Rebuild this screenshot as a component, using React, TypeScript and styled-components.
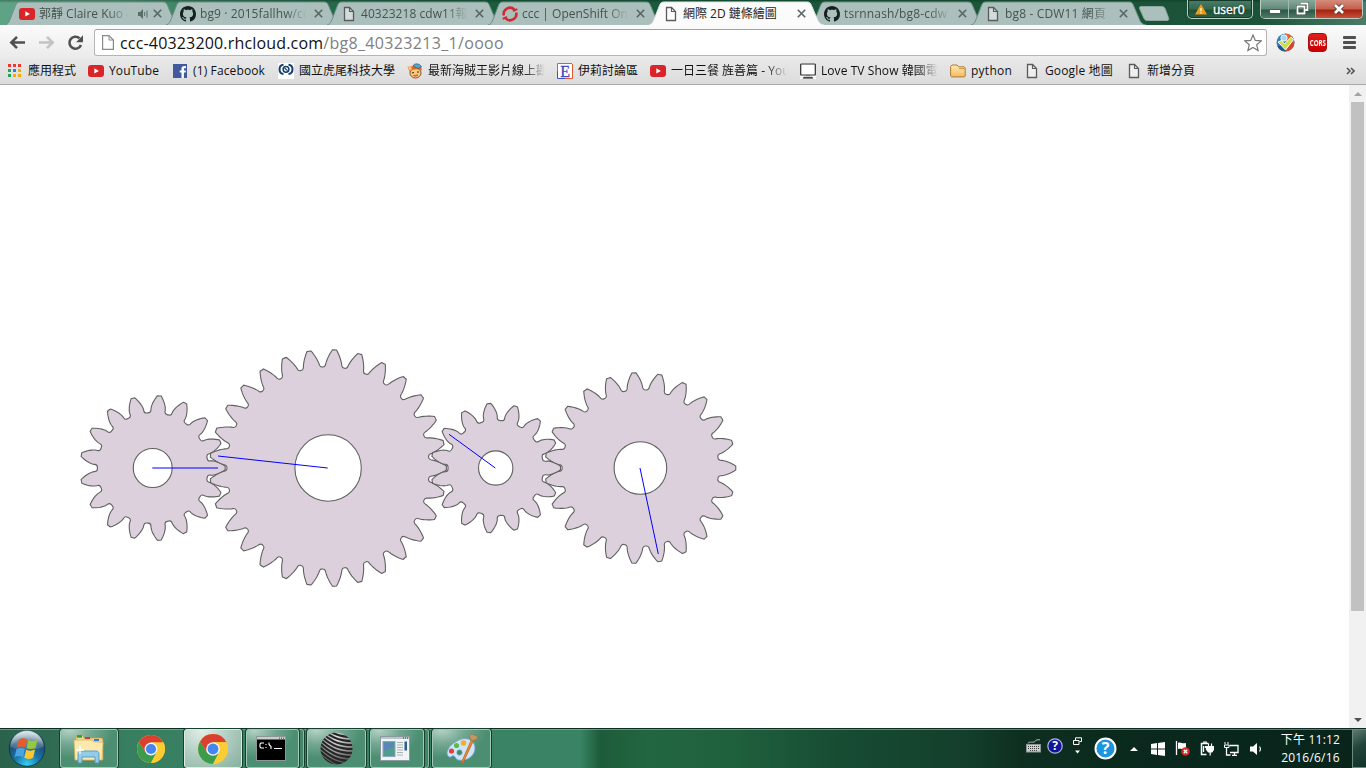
import React from "react";
import styled, { createGlobalStyle } from "styled-components";

const FONT = '"Open Sans", "Noto Sans CJK TC", sans-serif';

const GlobalStyle = createGlobalStyle`
  * { box-sizing: border-box; }
  html, body { margin: 0; padding: 0; overflow: hidden; }
  svg { display: block; flex: none; }
`;

const Screen = styled.div`
  width: 1366px;
  height: 768px;
  display: flex;
  flex-direction: column;
  overflow: hidden;
  background: #fff;
  font-family: ${FONT};
  font-size: 12px;
  color: #111;
`;

/* ---------- tab strip ---------- */

const TabStrip = styled.div`
  height: 25px;
  flex: none;
  display: flex;
  align-items: flex-start;
  padding-left: 5px;
  background:
    linear-gradient(180deg, rgba(0, 40, 20, 0.35) 0, rgba(0, 40, 20, 0) 3px),
    linear-gradient(90deg, #5fa386 0, #5a9d80 120px, #3f8668 175px, #25684a 330px, #1b5c3f 480px, #1a5538 1100px, #1b5238 1260px, #4c7c68 1366px);
`;

const TabBox = styled.div<{ $active?: boolean }>`
  position: relative;
  width: 175px;
  height: 25px;
  margin-right: -14px;
  z-index: ${(p) => (p.$active ? 2 : 1)};
  display: flex;
  align-items: center;
  padding: 2px 0 0 14px;
  flex: none;
  color: ${(p) => (p.$active ? "#222" : "#46524f")};
`;

const TabShape = styled.svg`
  position: absolute;
  left: 0;
  top: 0;
  z-index: -1;
`;

const TabIcon = styled.span`
  width: 16px;
  height: 16px;
  display: flex;
  align-items: center;
  justify-content: center;
  flex: none;
`;

const Label = styled.span<{ $w: number; $ls?: number; $fade?: boolean }>`
  width: ${(p) => p.$w}px;
  letter-spacing: ${(p) => p.$ls ?? 0}px;
  flex: none;
  white-space: nowrap;
  line-height: 18px;
  ${(p) => p.$fade && "mask-image: linear-gradient(90deg, #000 calc(100% - 22px), transparent);"}
`;

const TabLabel = styled(Label)`
  margin-left: 4px;
  font-size: 12px;
`;

const UserLabel = styled(Label)`
  -webkit-text-stroke: 0.4px #fff;
`;

const CloseSlot = styled.span<{ $w: number }>`
  width: ${(p) => p.$w}px;
  display: flex;
  justify-content: flex-end;
  align-items: center;
  gap: 4px;
  flex: none;
`;

const NewTab = styled.div`
  width: 32px;
  margin: 6px 0 0 6px;
  flex: none;
`;

const Caption = styled.div`
  margin-left: auto;
  display: flex;
  align-items: flex-start;
  gap: 7px;
  padding-right: 3px;
`;

const CaptionBox = styled.div`
  height: 19px;
  display: flex;
  border: 1px solid #b9cfc5;
  border-top: 0;
  border-radius: 0 0 5px 5px;
  box-shadow: inset 0 0 0 1px #143a29;
  overflow: hidden;
`;

const UserBox = styled(CaptionBox)`
  width: 66px;
  align-items: center;
  gap: 6px;
  padding-left: 7px;
  padding-top: 1px;
  color: #fff;
  text-shadow: 0 0 2px #000;
  background: linear-gradient(180deg, #4d7c67 0, #33684f 9px, #1d5138 10px, #2a6147 100%);
`;

const CaptionButton = styled.div<{ $w: number; $close?: boolean }>`
  width: ${(p) => p.$w}px;
  display: flex;
  align-items: center;
  justify-content: center;
  padding-bottom: 1px;
  border-right: ${(p) => (p.$close ? 0 : 1)}px solid #a3bcb1;
  background: ${(p) =>
    p.$close
      ? "linear-gradient(180deg, #d58c7c 0, #c4604b 9px, #a32210 10px, #c8503a 100%)"
      : "linear-gradient(180deg, #86a899 0, #62887a 9px, #2b5845 10px, #4d7b68 100%)"};
`;

/* ---------- toolbar ---------- */

const Toolbar = styled.div`
  height: 34px;
  flex: none;
  display: flex;
  align-items: center;
  padding: 1px 9px 0 7px;
  background: linear-gradient(180deg, #fbfbfb, #eaeaea);
`;

const NavButton = styled.span`
  width: 29px;
  display: flex;
  padding-left: 1px;
`;

const Omnibox = styled.div`
  width: 1173px;
  height: 27px;
  display: flex;
  align-items: center;
  padding: 0 4px 0 7px;
  background: #fff;
  border: 1px solid #b5b5b5;
  border-top-color: #a2a2a2;
  border-radius: 3px;
`;

const Url = styled.span`
  margin-left: 6px;
  font-size: 16px;
  line-height: 24px;
  letter-spacing: 0.33px;
  color: #808080;
  flex: 1;
  white-space: nowrap;
`;

const Host = styled.span`
  color: #111;
  letter-spacing: 0.17px;
`;

const Extensions = styled.div`
  display: flex;
  align-items: center;
  margin-left: 9px;
  flex: 1;
`;

const Cors = styled.div`
  width: 19px;
  height: 19px;
  margin: 0 16px 0 13px;
  border-radius: 4px;
  background: linear-gradient(180deg, #e0201c, #c00);
  border: 1px solid #a80c0c;
  color: #fff;
  font: 700 9px/17px "Open Sans", sans-serif;
  display: flex;
  justify-content: center;
  span { transform: scaleX(0.68); }
`;

const Bookmarks = styled.div`
  height: 26px;
  flex: none;
  display: flex;
  align-items: center;
  padding: 0 11px 2px 6px;
  background: linear-gradient(180deg, #e8e8e8, #dcdcdc);
  border-bottom: 1px solid #a9a9a9;
`;

const Bookmark = styled.div<{ $w: number }>`
  width: ${(p) => p.$w}px;
  display: flex;
  align-items: center;
  gap: 5px;
  flex: none;
`;

const Overflow = styled.svg`
  margin-left: auto;
`;

/* ---------- page ---------- */

const Page = styled.div`
  flex: 1;
  display: flex;
  min-height: 0;
`;

const ScrollBar = styled.div`
  width: 17px;
  margin-left: auto;
  background: #f1f1f1;
  display: flex;
  flex-direction: column;
  align-items: center;
`;

const ScrollArrow = styled.div`
  height: 17px;
  display: flex;
  align-items: center;
`;

const ScrollThumb = styled.div`
  width: 13px;
  height: 509px;
  background: #c1c1c1;
  margin-bottom: auto;
`;

/* ---------- taskbar ---------- */

const Taskbar = styled.div`
  height: 40px;
  flex: none;
  display: flex;
  align-items: flex-start;
  border-top: 1px solid #0c2c1e;
  box-shadow: inset 0 1px 0 rgba(150, 200, 175, 0.55);
  background: linear-gradient(90deg, #2a624b 0, #2f6b53 50px, #387f62 130px, #3a8264 480px, #3a8466 580px, #1d5c3b 600px, #226640 650px, #1f613d 730px, #174c33 840px, #133e2b 970px, #0d2f20 1020px, #0a281d 1150px, #08241b 1366px);
`;

const Orb = styled.div`
  width: 60px;
  padding: 1px 0 0 8px;
`;

const TaskButton = styled.div<{ $w: number; $kind?: "plain" | "active" }>`
  width: ${(p) => p.$w}px;
  height: 39px;
  margin-right: 4px;
  display: flex;
  align-items: center;
  justify-content: center;
  flex: none;
  ${(p) =>
    p.$kind !== "plain" &&
    `
    border: 1px solid ${p.$kind === "active" ? "#dcebe4" : "#a3c8b8"};
    border-radius: 3px;
    box-shadow: 0 0 0 1px #16402e;
    background: ${
      p.$kind === "active"
        ? "radial-gradient(ellipse at 30% 0, #e3eee9 0, #b4cfc3 45%, #86b09e 100%)"
        : "radial-gradient(ellipse 80% 75% at 15% 0, #b5d2c6 0, #74a892 50%, #4b8e72 100%)"
    };`}
`;

const CmdButton = styled(TaskButton)`
  padding-right: 3px;
`;

const WindowButton = styled(TaskButton)`
  padding-right: 4px;
`;

const StackEdge = styled.div<{ $mr: number }>`
  width: 4px;
  height: 39px;
  margin: 0 ${(p) => p.$mr}px 0 -3px;
  border: 1px solid #8ab8a5;
  border-left: 0;
  border-radius: 0 3px 3px 0;
  box-shadow: 1px 0 0 #16402e;
  background: #438468;
  flex: none;
`;

const Tray = styled.div`
  margin-left: auto;
  height: 39px;
  display: flex;
  align-items: center;
`;

const TraySlot = styled.span<{ $w: number; $dy?: number }>`
  width: ${(p) => p.$w}px;
  display: flex;
  justify-content: center;
  padding-bottom: ${(p) => p.$dy ?? 0}px;
`;

const Clock = styled.div`
  width: 84px;
  padding-left: 1px;
  color: #fff;
  text-align: center;
  font-size: 12px;
  line-height: 18px;
  letter-spacing: 0.2px;
`;

const ShowDesktop = styled.div`
  width: 14px;
  height: 39px;
  border: 1px solid #6d8a7f;
  border-right: 0;
  background: linear-gradient(150deg, #5c7b70 0, #22443a 45%, #12332a 100%);
`;

/* ---------- icons ---------- */

const PageIcon = ({ c = "#5b5b5b" }: { c?: string }) => (
  <svg width="16" height="16" viewBox="0 0 16 16">
    <path d="M3.5 1.5h5l4 4v9h-9z" fill="#fff" fillOpacity=".45" stroke={c} strokeWidth="1.3" />
    <path d="M8.5 1.5v4h4" fill="none" stroke={c} strokeWidth="1.1" />
  </svg>
);

const YouTubeIcon = () => (
  <svg width="16" height="16" viewBox="0 0 16 16">
    <rect x="0" y="2" width="16" height="12" rx="3" fill="#d9252a" />
    <path d="M6.3 5.3v5.2l4.6-2.6z" fill="#fff" />
  </svg>
);

const GitHubIcon = () => (
  <svg width="16" height="16" viewBox="0 0 16 16">
    <path
      fill="#16211f"
      d="M8 0C3.58 0 0 3.58 0 8c0 3.54 2.29 6.53 5.47 7.59.4.07.55-.17.55-.38 0-.19-.01-.82-.01-1.49-2.01.37-2.53-.49-2.69-.94-.09-.23-.48-.94-.82-1.13-.28-.15-.68-.52-.01-.53.63-.01 1.08.58 1.23.82.72 1.21 1.87.87 2.33.66.07-.52.28-.87.51-1.07-1.78-.2-3.64-.89-3.64-3.95 0-.87.31-1.59.82-2.15-.08-.2-.36-1.02.08-2.12 0 0 .67-.21 2.2.82.64-.18 1.32-.27 2-.27s1.36.09 2 .27c1.53-1.04 2.2-.82 2.2-.82.44 1.1.16 1.92.08 2.12.51.56.82 1.27.82 2.15 0 3.07-1.87 3.75-3.65 3.95.29.25.54.73.54 1.48 0 1.07-.01 1.93-.01 2.2 0 .21.15.46.55.38A8.01 8.01 0 0 0 16 8c0-4.42-3.58-8-8-8z"
    />
  </svg>
);

const OpenShiftIcon = () => (
  <svg width="16" height="16" viewBox="0 0 16 16" fill="none" stroke="#cf2a33" strokeWidth="2.5">
    <path d="M1.8 9.4A6.3 6.3 0 0 1 12.4 3.6" />
    <path d="M14.2 6.6A6.3 6.3 0 0 1 3.6 12.4" />
    <path d="M11 5l4.3-1.8M.7 12.8L5 11" strokeWidth="2" />
  </svg>
);

const AudioIcon = () => (
  <svg width="12" height="12" viewBox="0 0 12 12">
    <path d="M1 4h2l3-3v10L3 8H1z" fill="#5c6d69" />
    <path d="M7.7 4v4M10 2.5v7" stroke="#5c6d69" fill="none" />
  </svg>
);

const CloseIcon = () => (
  <svg width="9" height="9" viewBox="0 0 9 9">
    <path d="M.8.8l7.4 7.4M8.2.8L.8 8.2" stroke="#5a6462" strokeWidth="1.6" />
  </svg>
);

const AppsIcon = () => (
  <svg width="17" height="14" viewBox="0 0 17 14">
    {["#e8382f", "#e8382f", "#e8382f", "#23a455", "#2b7de9", "#f5ac00", "#23a455", "#f5ac00", "#f5ac00"].map((c, i) => (
      <rect key={i} x={2 + (i % 3) * 5} y={Math.floor(i / 3) * 5} width="3" height="3" fill={c} />
    ))}
  </svg>
);

const FacebookIcon = () => (
  <svg width="16" height="14" viewBox="0 0 16 14">
    <rect width="14" height="14" x="1" fill="#3f5b9e" />
    <path d="M9.5 14V8.6H7.7V6.4h1.8V4.8C9.5 3 10.5 2 12.3 2h1.6v2.2h-1.1c-.7 0-.9.3-.9.9v1.3h2l-.3 2.2h-1.7V14z" fill="#fff" />
  </svg>
);

const NfuIcon = () => (
  <svg width="16" height="16" viewBox="0 0 16 16">
    <rect width="16" height="16" fill="#fff" />
    <path d="M5.5 1.8C.2 2 .2 10.5 5.5 11M10.5 1.8c5.3.2 5.3 8.7 0 9.2" stroke="#13406e" strokeWidth="2" fill="none" />
    <circle cx="8" cy="6.3" r="2.9" stroke="#13406e" strokeWidth="1.5" fill="#fff" />
    <path d="M6.5 5l3 2.6" stroke="#13406e" strokeWidth="1.2" />
  </svg>
);

const PirateIcon = () => (
  <svg width="16" height="16" viewBox="0 0 16 16">
    <ellipse cx="8.5" cy="10" rx="5.5" ry="5" fill="#f7cf7c" stroke="#8a3b16" strokeWidth=".9" />
    <path d="M.5 3.500C4 4.500 7 2 9 2.500l5 1.500 1 3.500C11 5.500 6 6 2.500 8.500z" fill="#e86326" />
    <path d="M1 4l3-.5 1 3-2.500 1z" fill="#f6c95a" />
    <path d="M6 3c1-3 7-3 8.500 1L11 5.500z" fill="#53a8cf" stroke="#234d68" strokeWidth=".6" />
    <path d="M5 10l2-.5M10 9h2" stroke="#43210d" strokeWidth="1.2" />
    <path d="M6.500 12.500c2 1.300 3.500.500 4.500-.500z" fill="#fff" stroke="#c22" strokeWidth=".7" />
  </svg>
);

const EIcon = () => (
  <svg width="16" height="16" viewBox="0 0 16 16">
    <rect x=".5" y=".5" width="15" height="15" fill="#fff" />
    <path d="M.5 8V.5H15" stroke="#2cb34a" fill="none" />
    <path d="M15.5 1v14.5H8" stroke="#e05a2b" fill="none" />
    <path d="M.5 8v7.5H8" stroke="#3a53c6" fill="none" />
    <text x="8.2" y="13.5" textAnchor="middle" fontFamily="Liberation Serif" fontSize="16" fill="#3f46b8" stroke="#3f46b8" strokeWidth=".3">E</text>
  </svg>
);

const MonitorIcon = () => (
  <svg width="16" height="16" viewBox="0 0 16 16">
    <rect width="16" height="16" fill="#f7f7f7" />
    <rect x=".7" y="1" width="14.6" height="11" rx=".6" fill="#fff" stroke="#2b2b2b" strokeWidth="1.2" />
    <path d="M4 14.2h8l1 1H3z" fill="#2b2b2b" stroke="#2b2b2b" strokeWidth=".6" />
    <path d="M6 12.5h4" stroke="#777" />
  </svg>
);

const FolderIcon = () => (
  <svg width="16" height="14" viewBox="0 0 16 14">
    <defs>
      <linearGradient id="fold" x1="0" y1="0" x2="0" y2="1">
        <stop offset="0" stopColor="#ffe9b0" />
        <stop offset="1" stopColor="#f3bb63" />
      </linearGradient>
    </defs>
    <path d="M.6 12V2.5L2 1h5l1.5 1.8H14L15.2 4v8l-.8.9H1.5z" fill="url(#fold)" stroke="#a97c35" />
    <path d="M9 4.6h5.5" stroke="#c99544" />
  </svg>
);

const ChromeLogo = ({ s = 28 }: { s?: number }) => (
  <svg width={s} height={s} viewBox="0 0 28 28">
    <circle cx="14" cy="14" r="14" fill="#fbcc34" />
    <path d="M1.9 7A14 14 0 0 0 14 28l5.6-10.8L14 14 8.4 17.2z" fill="#3b9c4b" />
    <path d="M14 7.6h12.4A14 14 0 0 0 1.9 7l6.5 10.2z" fill="#d9402f" />
    <path d="M14 28a14 14 0 0 0 12.4-20.4H14l5.6 9.6z" fill="#fbcc34" />
    <circle cx="14" cy="14" r="6.4" fill="#f3f6fb" />
    <circle cx="14" cy="14" r="5.1" fill="#4586ee" />
  </svg>
);

const StartOrb = () => (
  <svg width="38" height="38" viewBox="0 0 38 38">
    <defs>
      <radialGradient id="orb" cx=".5" cy=".95" r=".9">
        <stop offset="0" stopColor="#35d0f5" />
        <stop offset=".4" stopColor="#1a74a8" />
        <stop offset=".75" stopColor="#1f4c72" />
        <stop offset="1" stopColor="#90aec0" />
      </radialGradient>
      <linearGradient id="gloss" x1="0" y1="0" x2="0" y2="1">
        <stop offset="0" stopColor="#fff" stopOpacity=".7" />
        <stop offset="1" stopColor="#fff" stopOpacity=".08" />
      </linearGradient>
    </defs>
    <circle cx="19" cy="18.5" r="17.8" fill="url(#orb)" stroke="#123c50" strokeWidth="1" />
    <path d="M2.5 17a16.5 16.5 0 0 1 33 0c-9 4-24 4-33 0z" fill="url(#gloss)" />
    <g transform="translate(19 18.5) scale(1.12) translate(-18.2 -18.5)">
      <path d="M11 10.5c3-1.6 5.2-1.3 7.3-.1l-1.7 7.3c-2.4-1.2-4.6-1.4-7.5 0z" fill="#ea5a28" />
      <path d="M19.5 10.9c2.7 1.3 5 1.3 8-.2L25.8 18c-2.8 1.4-5.3 1.3-8 .1z" fill="#96c83c" />
      <path d="M8.8 19.1c2.9-1.5 5.2-1.2 7.5 0l-1.7 7.2c-2.3-1.3-4.5-1.4-7.5 0z" fill="#4ba3e3" />
      <path d="M17.4 19.6c2.7 1.2 5.2 1.3 8-.1l-1.7 7.2c-2.8 1.5-5.3 1.4-8 .1z" fill="#fcc62d" />
    </g>
  </svg>
);

const ExplorerIcon = () => (
  <svg width="34" height="30" viewBox="0 0 34 30">
    <path d="M4 2l7-1 1 3h18l1 2v20H3z" fill="#f3d98c" stroke="#c29b45" strokeWidth=".8" />
    <rect x="5" y="1.2" width="5" height="2.5" fill="#24a03a" />
    <rect x="13" y="3" width="5" height="2" fill="#d93a2a" />
    <rect x="22" y="5" width="5" height="2" fill="#3a78d0" />
    <path d="M2 6h18l2 2h9l-1 18H3z" fill="#fbe9ae" stroke="#d2ad5c" strokeWidth=".7" />
    <path d="M6 29v-9c0-2 1-3 3-3h15c2 0 3 1 3 3v9h-4v-6H10v6z" fill="#93cbe9" stroke="#4f98c4" strokeWidth=".9" />
    <path d="M8 12v8M4 16h8" stroke="#fff" strokeWidth="1.3" />
  </svg>
);

const CmdIcon = () => (
  <svg width="31" height="25" viewBox="0 0 31 25">
    <rect x=".5" y=".5" width="29" height="24" fill="#000" stroke="#8d9896" />
    <rect x="1" y="1" width="28" height="2.5" fill="#c8cecd" />
    <path d="M23 2.2h1M25 2.2h1M27 2.2h1" stroke="#445" />
    <path d="M8 7H5L4 8v3l1 1h3M10 8v1M10 11v1M13 6.5v2l2 2v2.5M18 12.5h8" stroke="#fff" strokeWidth="1.1" fill="none" />
  </svg>
);

const SphereIcon = () => (
  <svg width="33" height="33" viewBox="0 0 33 33">
    <defs>
      <radialGradient id="sph" cx=".5" cy=".2" r=".85">
        <stop offset="0" stopColor="#e6e6e6" />
        <stop offset=".5" stopColor="#9a9a9a" />
        <stop offset="1" stopColor="#3b3b3b" />
      </radialGradient>
      <clipPath id="sphc"><circle cx="16.5" cy="16.5" r="16" /></clipPath>
    </defs>
    <circle cx="16.5" cy="16.5" r="16" fill="url(#sph)" />
    <g clipPath="url(#sphc)" fill="none" stroke="#262626" strokeWidth="2">
      {[-18, -14, -10, -6, -2, 2, 6, 10, 14, 18, 22].map((d) => (
        <path key={d} d={`M-2 ${d}C4 ${d + 4} 12 ${d + 16} 35 ${d + 15}`} />
      ))}
    </g>
  </svg>
);

const WindowIcon = () => (
  <svg width="30" height="25" viewBox="0 0 30 25">
    <rect x=".5" y=".5" width="29" height="24" fill="#f1f4f5" stroke="#8a999b" />
    <rect x="1" y="1" width="28" height="2" fill="#b9c6cc" />
    <path d="M23 2h1M25 2h1M27 2h1" stroke="#334" />
    <rect x="3" y="5.5" width="12" height="15" fill="#4f9d8a" stroke="#8fa3bd" strokeWidth="1" />
    <path d="M4 6.5h10v4L4 15z" fill="#5b86b8" />
    <path d="M17 6.5h6M17 9h6M17 11.5h6M17 14h6M17 16.5h6M17 19h6" stroke="#a9b0b3" />
    <rect x="24.5" y="5.5" width="2.5" height="9" fill="#2b5f90" />
  </svg>
);

const PaintIcon = () => (
  <svg width="34" height="32" viewBox="0 0 34 32">
    <path d="M12 8c8-5 17-2 18 6 1 9-9 15-17 13-3-1-2-3-4-4s-3 2-5 1C-1 20 4 12 12 8z" fill="#cfe4f4" stroke="#6ba2cf" strokeWidth=".9" />
    <circle cx="14.5" cy="19.5" r="2.7" fill="#3f8a6c" stroke="#7fb0d0" strokeWidth=".6" />
    <circle cx="6.5" cy="18" r="2.6" fill="#e0413a" />
    <circle cx="11.5" cy="12.5" r="2.6" fill="#5cbb46" />
    <circle cx="18.5" cy="10" r="2.8" fill="#f4ae2a" />
    <path d="M26.5 6.5l2 1L18 30l-1.500 1 .3-2.500z" fill="#ef8a30" stroke="#b25f1b" strokeWidth=".7" />
    <path d="M25.5 6.5C24 3 25 2 27 1c3 .5 5 3 6.500 3-1 1-3 3.500-5.500 3.800z" fill="#c79763" stroke="#8e6236" strokeWidth=".5" />
  </svg>
);

/* ---------- gears ---------- */

const MODULE = 7.63;
const PRESSURE = (25 * Math.PI) / 180;

// Outline of a spur gear: involute flanks, round root fillets and a shaft hole.
function gearPath(teeth: number, cx: number, cy: number) {
  const m = MODULE;
  const pitchR = (teeth * m) / 2;
  const baseR = pitchR * Math.cos(PRESSURE);
  const tipR = pitchR + m;
  const rootR = pitchR - 1.25 * m;
  const filletRad = 1.5 * 0.25 * m;
  const inv = (r: number) => {
    const t = Math.sqrt(Math.max(0, (r * r) / (baseR * baseR) - 1));
    return t - Math.atan(t);
  };
  let filletR = Math.sqrt((rootR + filletRad) ** 2 - filletRad ** 2);
  if (baseR < filletR) filletR = rootR + 0.25 * m;
  const startR = Math.max(filletR, baseR);
  const step = (2 * Math.PI) / teeth;
  const half = (r: number) => step / 4 + inv(pitchR) - inv(r);
  const filletAngle = Math.atan(filletRad / (filletRad + rootR));
  const pt = (r: number, a: number) => `${(cx + r * Math.cos(a)).toFixed(2)} ${(cy + r * Math.sin(a)).toFixed(2)}`;
  const radii = Array.from({ length: 9 }, (_, i) => startR + ((tipR - startR) * i) / 8);
  let d = "";
  for (let i = 0; i < teeth; i++) {
    const a = i * step;
    const h = half(startR);
    d += `${i ? "L" : "M"}${pt(filletR, a - h)}`;
    radii.forEach((r) => (d += `L${pt(r, a - half(r))}`));
    d += `A${tipR} ${tipR} 0 0 1 ${pt(tipR, a + half(tipR))}`;
    [...radii].reverse().forEach((r) => (d += `L${pt(r, a + half(r))}`));
    d += `L${pt(filletR, a + h)}`;
    d += `A${filletRad} ${filletRad} 0 0 0 ${pt(rootR, a + h + filletAngle)}`;
    d += `A${rootR} ${rootR} 0 0 1 ${pt(rootR, a + step - h - filletAngle)}`;
    d += `A${filletRad} ${filletRad} 0 0 0 ${pt(filletR, a + step - h)}`;
  }
  const s = pitchR * 0.3;
  d += `ZM${cx + s} ${cy}A${s} ${s} 0 1 0 ${cx - s} ${cy}A${s} ${s} 0 1 0 ${cx + s} ${cy}Z`;
  return d;
}

const CY = 383;
const GEARS = [
  { teeth: 17, x: 152.7, ex: 218, ey: 383 },
  { teeth: 29, x: 328.1, ex: 218, ey: 371 },
  { teeth: 15, x: 495.7, ex: 449, ey: 349.3 },
  { teeth: 23, x: 640.4, ex: 658.3, ey: 469 },
];

const Gears = () => (
  <svg width="1349" height="643" viewBox="0 0 1349 643">
    {GEARS.map((g) => (
      <path key={g.teeth} d={gearPath(g.teeth, g.x, CY)} fill="#ddd0dd" stroke="#606060" strokeWidth="1.1" fillRule="evenodd" />
    ))}
    {GEARS.map((g) => (
      <line key={g.teeth} x1={g.x - 0.4} y1={CY} x2={g.ex} y2={g.ey} stroke="#00f" strokeWidth="1" />
    ))}
  </svg>
);

/* ---------- data ---------- */

const TABS = [
  { icon: <YouTubeIcon />, text: "郭靜 Claire Kuo -", audio: true, ls: 0, fade: true },
  { icon: <GitHubIcon />, text: "bg9 · 2015fallhw/co", ls: 0.1, fade: true },
  { icon: <PageIcon />, text: "40323218 cdw11報", ls: 0.05, fade: true },
  { icon: <OpenShiftIcon />, text: "ccc | OpenShift Onl", ls: 0, fade: true },
  { icon: <PageIcon />, text: "網際 2D 鏈條繪圖", active: true, ls: 0 },
  { icon: <GitHubIcon />, text: "tsrnnash/bg8-cdw", ls: 0.15, fade: true },
  { icon: <PageIcon />, text: "bg8 - CDW11 網頁", ls: 0.15, fade: true },
];

const MARKS = [
  { icon: <AppsIcon />, text: "應用程式", w: 82, ls: 0 },
  { icon: <YouTubeIcon />, text: "YouTube", w: 84, ls: 0.1 },
  { icon: <FacebookIcon />, text: "(1) Facebook", w: 106, ls: 0.13 },
  { icon: <NfuIcon />, text: "國立虎尾科技大學", w: 129, ls: 0 },
  { icon: <PirateIcon />, text: "最新海賊王影片線上觀", w: 150, ls: 0, tw: 117 },
  { icon: <EIcon />, text: "伊莉討論區", w: 93, ls: 0 },
  { icon: <YouTubeIcon />, text: "一日三餐 旌善篇 - You", w: 150, ls: 0, tw: 117 },
  { icon: <MonitorIcon />, text: "Love TV Show 韓國電", w: 150, ls: 0.07, tw: 117 },
  { icon: <FolderIcon />, text: "python", w: 74, ls: 0.25 },
  { icon: <PageIcon />, text: "Google 地圖", w: 102, ls: 0.15 },
  { icon: <PageIcon />, text: "新增分頁", w: 90, ls: 0 },
];

const TAB_PATH = "M0 25C3 24.5 4 22 5 19.5L10.5 5.5C11.5 3 12.5 2 15 2H158C160.5 2 161.5 3 162.5 5.5L168.5 19.5C169.5 22 171 24.5 175 25";

export default function App() {
  return (
    <Screen>
      <GlobalStyle />
      <TabStrip>
        {TABS.map((t) => (
          <TabBox key={t.text} $active={t.active}>
            <TabShape width="175" height="25">
              <path d={TAB_PATH} fill={t.active ? "#fbfbfb" : "#abc0bd"} stroke={t.active ? "#dfe6e3" : "#6f8f84"} strokeWidth="1" />
            </TabShape>
            <TabIcon>{t.icon}</TabIcon>
            <TabLabel $w={t.audio ? 91 : 107} $ls={t.ls} $fade={t.fade}>{t.text}</TabLabel>
            <CloseSlot $w={t.audio ? 32 : 16}>
              {t.audio && <AudioIcon />}
              <CloseIcon />
            </CloseSlot>
          </TabBox>
        ))}
        <NewTab>
          <svg width="32" height="15" viewBox="0 0 32 15">
            <path d="M3 .5h20.5c2 0 3 .8 3.6 2.2l3.4 9c.7 1.8.2 2.8-1.5 2.8H9.500c-2 0-3-.8-3.600-2.200L1.800 3C1.200 1.300 1.500.5 3 .5z" fill="#abc0bd" stroke="#8ea8a1" />
          </svg>
        </NewTab>
        <Caption>
          <UserBox>
            <svg width="12" height="11" viewBox="0 0 12 11">
              <path d="M6 0l6 10.5H0z" fill="#f39a12" />
              <path d="M6 4v3.3M6 8.2v1.2" stroke="#fff" strokeWidth="1.2" />
            </svg>
            <UserLabel $w={32}>user0</UserLabel>
          </UserBox>
          <CaptionBox>
            <CaptionButton $w={28}>
              <svg width="12" height="12" viewBox="0 0 12 12"><rect x=".5" y="6.5" width="11" height="4" fill="#fff" stroke="#4b5f58" /></svg>
            </CaptionButton>
            <CaptionButton $w={27}>
              <svg width="13" height="13" viewBox="0 0 13 13">
                <path d="M4.5 1.5h7v6.5h-2M1.5 4.5h7v7h-7z" fill="none" stroke="#344b42" strokeWidth="3.2" />
                <path d="M4.5 1.5h7v6.5h-2M1.5 4.5h7v7h-7z" fill="none" stroke="#fff" strokeWidth="1.8" />
              </svg>
            </CaptionButton>
            <CaptionButton $w={46} $close>
              <svg width="14" height="12" viewBox="0 0 14 12">
                <path d="M3 2l8 8M11 2l-8 8" stroke="#50332f" strokeWidth="4.4" />
                <path d="M3 2l8 8M11 2l-8 8" stroke="#fff" strokeWidth="2.8" />
              </svg>
            </CaptionButton>
          </CaptionBox>
        </Caption>
      </TabStrip>

      <Toolbar>
        <NavButton>
          <svg width="18" height="16" viewBox="0 0 18 16"><path d="M17 7.5H4M9 1.8L3.3 7.5 9 13.2" fill="none" stroke="#505050" strokeWidth="2.6" /></svg>
        </NavButton>
        <NavButton>
          <svg width="18" height="16" viewBox="0 0 18 16"><path d="M2 7.5h13M10 1.8l5.7 5.7-5.7 5.7" fill="none" stroke="#c3c3c3" strokeWidth="2.6" /></svg>
        </NavButton>
        <NavButton>
          <svg width="18" height="16" viewBox="0 0 18 16">
            <path d="M15 10A6 6 0 1 1 13.5 3.3" fill="none" stroke="#505050" strokeWidth="2.6" />
            <path d="M17 .3v7h-7z" fill="#505050" />
          </svg>
        </NavButton>
        <Omnibox>
          <svg width="12" height="15" viewBox="0 0 12 15">
            <path d="M.6.6h6.4l4.4 4.4v9.4H.6z" fill="#fff" stroke="#8a8a8a" strokeWidth="1.2" />
            <path d="M7 .6V5h4.4" fill="none" stroke="#8a8a8a" />
          </svg>
          <Url><Host>ccc-40323200.rhcloud.com</Host>/bg8_40323213_1/oooo</Url>
          <svg width="18" height="18" viewBox="0 0 18 18">
            <path d="M9 1l2.3 5.4 5.9.5-4.5 3.9 1.4 5.8L9 13.5l-5.1 3.1 1.4-5.8L.8 6.9l5.9-.5z" fill="#fff" stroke="#777" strokeWidth="1.2" />
          </svg>
        </Omnibox>
        <Extensions>
          <svg width="19" height="19" viewBox="0 0 19 19">
            <circle cx="9.5" cy="9.5" r="9" fill="#2f7fc0" />
            <path d="M9.5.5a9 9 0 0 1 9 9H9.5z" fill="#e9632a" />
            <path d="M18.5 9.5a9 9 0 0 1-9 9v-9z" fill="#d8442c" />
            <path d="M9.5 18.5a9 9 0 0 1-8-5l8-4z" fill="#1e558c" />
            <circle cx="8" cy="5" r="3.2" fill="#a8d4ef" stroke="#fff" strokeWidth=".8" />
            <path d="M2 9l3.5-1.5 3 3.500L15 4l2.500 2.500-8 10.500z" fill="#cde04a" stroke="#fff" strokeWidth="1" />
          </svg>
          <Cors><span>CORS</span></Cors>
          <svg width="13" height="13" viewBox="0 0 13 13"><path d="M1 1.5h11M1 6.5h11M1 11.5h11" stroke="#505050" strokeWidth="2.8" strokeLinecap="round" /></svg>
        </Extensions>
      </Toolbar>

      <Bookmarks>
        {MARKS.map((b) => (
          <Bookmark key={b.text} $w={b.w}>
            {b.icon}
            <Label $w={b.tw ?? b.w - 24} $ls={b.ls} $fade={!!b.tw}>{b.text}</Label>
          </Bookmark>
        ))}
        <Overflow width="9" height="8" viewBox="0 0 9 8"><path d="M1 1l3 3-3 3M5 1l3 3-3 3" fill="none" stroke="#555" strokeWidth="1.6" /></Overflow>
      </Bookmarks>

      <Page>
        <Gears />
        <ScrollBar>
          <ScrollArrow><svg width="8" height="4" viewBox="0 0 8 4"><path d="M0 4l4-4 4 4z" fill="#a3a3a3" /></svg></ScrollArrow>
          <ScrollThumb />
          <ScrollArrow><svg width="8" height="4" viewBox="0 0 8 4"><path d="M0 0l4 4 4-4z" fill="#505050" /></svg></ScrollArrow>
        </ScrollBar>
      </Page>

      <Taskbar>
        <Orb><StartOrb /></Orb>
        <TaskButton $w={58}><ExplorerIcon /></TaskButton>
        <TaskButton $w={58} $kind="plain"><ChromeLogo /></TaskButton>
        <TaskButton $w={58} $kind="active"><ChromeLogo s={30} /></TaskButton>
        <CmdButton $w={53}><CmdIcon /></CmdButton>
        <StackEdge $mr={3} />
        <TaskButton $w={59}><SphereIcon /></TaskButton>
        <WindowButton $w={54}><WindowIcon /></WindowButton>
        <StackEdge $mr={3} />
        <TaskButton $w={59}><PaintIcon /></TaskButton>
        <Tray>
          <TraySlot $w={22} $dy={5}>
            <svg width="15" height="14" viewBox="0 0 15 14">
              <path d="M2 4.500c0-2 4-1 6-1.500 2-.5 1-2 3-2.200h3" fill="none" stroke="#aab8b2" />
              <rect x=".5" y="5.5" width="14" height="7.5" fill="#c9cfcc" stroke="#8d9793" />
              <path d="M2 7.5h11M2 9.5h11M4 11.5h7" stroke="#444" strokeDasharray="1 1" />
            </svg>
          </TraySlot>
          <TraySlot $w={22} $dy={6}>
            <svg width="16" height="16" viewBox="0 0 16 16">
              <circle cx="8" cy="8" r="7.2" fill="#12129c" stroke="#aeb8d8" strokeWidth="1.2" />
              <text x="8" y="12.3" textAnchor="middle" fontFamily="Open Sans" fontWeight="700" fontSize="12" fill="#fff">?</text>
            </svg>
          </TraySlot>
          <TraySlot $w={22} $dy={7}>
            <svg width="9" height="17" viewBox="0 0 9 17">
              <path d="M2.500 3V.8h6v3.700H6.500M.5 3.500h5.500v4H.5z" fill="none" stroke="#fff" />
              <path d="M2 13.500h5l-2.500 3z" fill="#fff" />
            </svg>
          </TraySlot>
          <TraySlot $w={34}>
            <svg width="23" height="23" viewBox="0 0 23 23">
              <circle cx="11.5" cy="11.5" r="10" fill="#1b95dd" stroke="#fff" strokeWidth="2" />
              <text x="11.5" y="17.3" textAnchor="middle" fontFamily="Open Sans" fontWeight="700" fontSize="16" fill="#fff">?</text>
            </svg>
          </TraySlot>
          <TraySlot $w={23}><svg width="8" height="4" viewBox="0 0 8 4"><path d="M0 4l4-4 4 4z" fill="#fff" /></svg></TraySlot>
          <TraySlot $w={26}>
            <svg width="14" height="14" viewBox="0 0 14 14"><path d="M0 2l6-.9v5.500H0zM7 1l7-1v6.600H7zM0 7.500h6V13l-6-.9zM7 7.500h7V14l-7-1z" fill="#fff" /></svg>
          </TraySlot>
          <TraySlot $w={23}>
            <svg width="15" height="15" viewBox="0 0 15 15">
              <path d="M1.5 0v14" stroke="#fff" strokeWidth="1.3" />
              <path d="M3 2c3-1.500 4 1.300 8 0v6c-4 1-5-1-8 0z" fill="#fff" />
              <circle cx="10.5" cy="10.5" r="4.3" fill="#d8291f" />
              <path d="M8.8 8.8l3.400 3.400M12.200 8.800l-3.400 3.400" stroke="#fff" strokeWidth="1.3" />
            </svg>
          </TraySlot>
          <TraySlot $w={25}>
            <svg width="14" height="15" viewBox="0 0 14 15">
              <path d="M6.500 13.500h-5v-11h7" fill="none" stroke="#fff" strokeWidth="1.5" />
              <path d="M3 1.200h4M3.500 5v6M5.500 5v2" stroke="#fff" strokeWidth="1.3" />
              <path d="M8.500 2.500v3M11.500 2.500v3M6.500 5.500h7v3L12 11H8.500L6.500 8.500zM10.200 11v3.500" fill="#fff" stroke="#fff" strokeWidth="1.2" />
            </svg>
          </TraySlot>
          <TraySlot $w={25}>
            <svg width="15" height="14" viewBox="0 0 15 14">
              <path d="M5.500 3.500h8.500v7H6M8 13.300h5M10.500 11v2M2.500 5v8h4" fill="none" stroke="#fff" strokeWidth="1.3" />
              <path d="M1 0v2.500M4 0v2.500M.5 3h4.500v2.500H.5z" stroke="#fff" fill="none" />
            </svg>
          </TraySlot>
          <TraySlot $w={24}>
            <svg width="13" height="14" viewBox="0 0 13 14">
              <path d="M0 4.500h3L7 1v12L3 9.500H0z" fill="#fff" />
              <path d="M9.500 4.500q2 2.500 0 5" stroke="#dfe8e4" fill="none" strokeWidth="1.2" />
            </svg>
          </TraySlot>
          <Clock><div>下午 11:12</div><div>2016/6/16</div></Clock>
          <ShowDesktop />
        </Tray>
      </Taskbar>
    </Screen>
  );
}
